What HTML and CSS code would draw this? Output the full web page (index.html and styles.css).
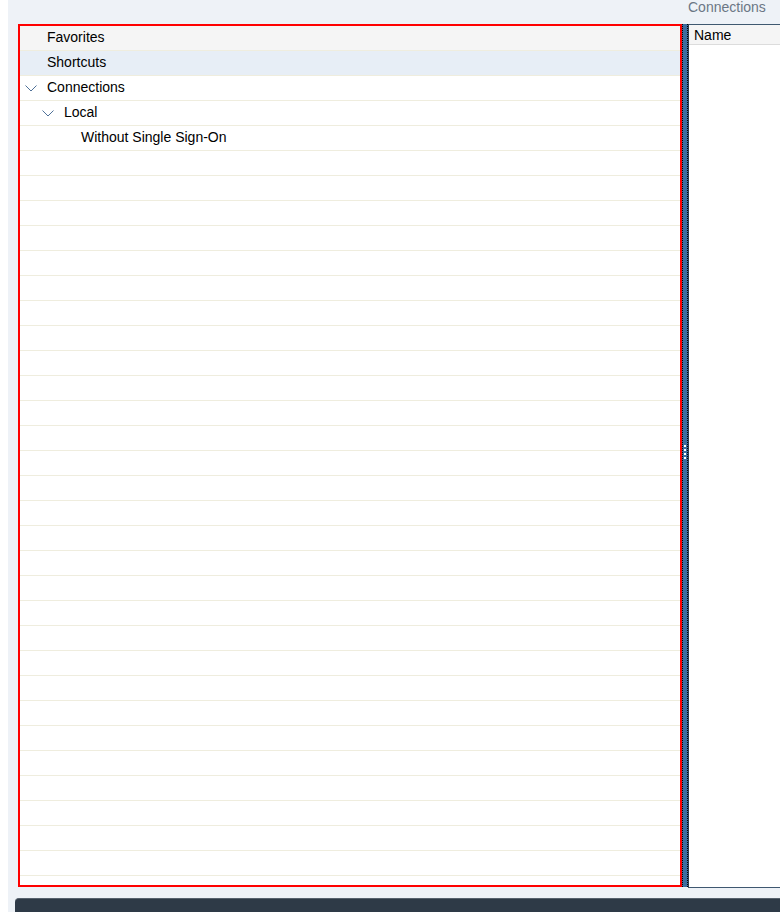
FILE: index.html
```html
<!DOCTYPE html>
<html>
<head>
<meta charset="utf-8">
<link rel="stylesheet" href="styles.css">
</head>
<body>
<div class="app">
  <div class="topbar"><span class="title">Connections</span></div>
  <div class="main">
    <div class="tree">
      <div class="row fav"><span class="label lvl0">Favorites</span></div>
      <div class="row sel"><span class="label lvl0">Shortcuts</span></div>
      <div class="row"><svg class="chev c0" width="12" height="7" viewBox="0 0 12 7"><polyline points="0.5,0.5 6,6 11.5,0.5" fill="none" stroke="#4f7198" stroke-width="1"/></svg><span class="label lvl0">Connections</span></div>
      <div class="row"><svg class="chev c1" width="12" height="7" viewBox="0 0 12 7"><polyline points="0.5,0.5 6,6 11.5,0.5" fill="none" stroke="#4f7198" stroke-width="1"/></svg><span class="label lvl1">Local</span></div>
      <div class="row"><span class="label lvl2">Without Single Sign-On</span></div>
      <div class="row"></div><div class="row"></div><div class="row"></div><div class="row"></div><div class="row"></div>
      <div class="row"></div><div class="row"></div><div class="row"></div><div class="row"></div><div class="row"></div>
      <div class="row"></div><div class="row"></div><div class="row"></div><div class="row"></div><div class="row"></div>
      <div class="row"></div><div class="row"></div><div class="row"></div><div class="row"></div><div class="row"></div>
      <div class="row"></div><div class="row"></div><div class="row"></div><div class="row"></div><div class="row"></div>
      <div class="row"></div><div class="row"></div><div class="row"></div><div class="row"></div>
    </div>
    <div class="splitter"><div class="grip"><i></i><i></i><i></i><i></i></div></div>
    <div class="right">
      <div class="colhead">Name</div>
    </div>
  </div>
  <div class="bottombar"></div>
</div>
</body>
</html>
```
FILE: styles.css
```css
html, body {
  margin: 0;
  padding: 0;
  background: #ffffff;
  font-family: "Liberation Sans", Arial, sans-serif;
  font-size: 14px;
  color: #000;
}
.app {
  margin-left: 8px;
  height: 912px;
  background: #eef2f7;
  overflow: hidden;
  display: flex;
  flex-direction: column;
}
.topbar {
  height: 24px;
  flex: none;
  padding-left: 680px;
  overflow: hidden;
}
.title {
  display: block;
  line-height: 14px;
  margin-top: 0;
  color: #6b7785;
  white-space: nowrap;
}
.main {
  display: flex;
  flex: none;
  margin-left: 10px;
  height: 864px;
}
.tree {
  width: 664px;
  height: 863px;
  box-sizing: border-box;
  border: 2px solid #ff0000;
  background: #ffffff;
  overflow: hidden;
  flex: none;
}
.row {
  height: 24px;
  border-bottom: 1px solid #efedde;
  display: flex;
  align-items: center;
  position: relative;
}
.row.fav { background: #f5f5f5; }
.row.sel { background: #e7eef6; }
.label {
  white-space: nowrap;
  margin-top: -2px;
}
.lvl0 { padding-left: 27px; }
.lvl1 { padding-left: 44px; }
.lvl2 { padding-left: 61px; }
.chev {
  position: absolute;
  top: 9px;
}
.c0 { left: 5px; }
.c1 { left: 22px; }
.splitter {
  width: 4px;
  flex: none;
  background: #3d6d9f;
  border-left: 1px dotted #000;
  border-right: 1px dotted #000;
  display: flex;
  align-items: center;
  justify-content: center;
  height: 863px;
  box-sizing: content-box;
}
.grip {
  display: flex;
  flex-direction: column;
  gap: 2px;
  margin-top: -8px;
}
.grip i {
  display: block;
  width: 2px;
  height: 2px;
  background: #ffffff;
}
.right {
  flex: 1;
  background: #ffffff;
  border-top: 1px solid #3f5870;
  border-bottom: 1px solid #3f5870;
  border-left: 1px solid #2e3f50;
  height: 862px;
}
.colhead {
  height: 19px;
  background: #f5f5f5;
  border-bottom: 1px solid #dcdcdc;
  padding-left: 5px;
  line-height: 21px;
}
.bottombar {
  margin-top: 10px;
  margin-left: 7px;
  height: 20px;
  background: #2e3a47;
  border-top: 1px solid #56616d;
  border-top-left-radius: 4px;
  flex: none;
}
```
